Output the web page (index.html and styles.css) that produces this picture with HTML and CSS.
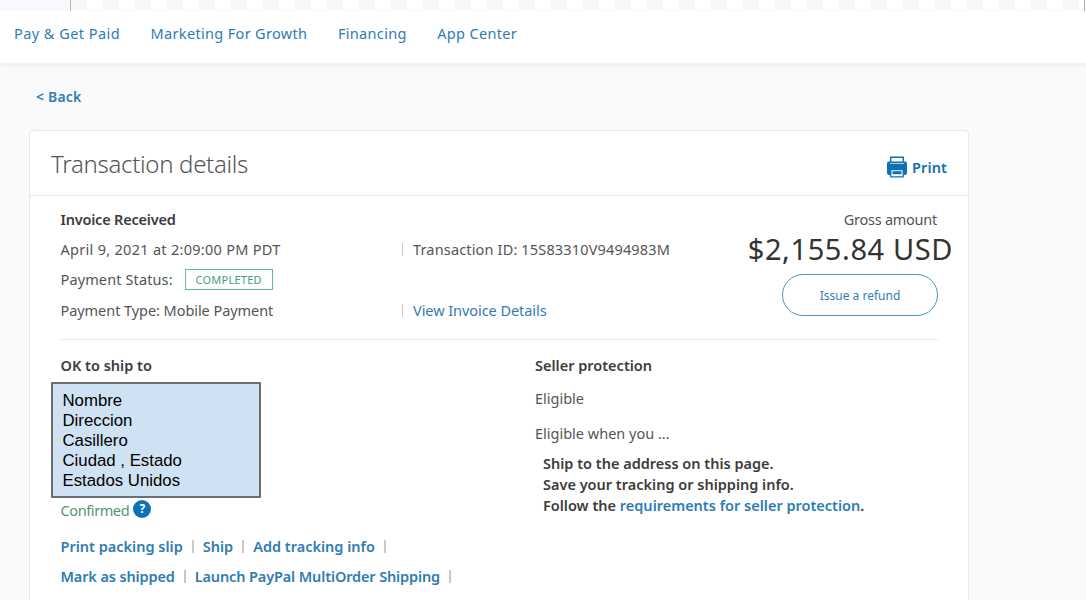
FILE: index.html
```html
<!DOCTYPE html>
<html lang="en">
<head>
    <meta charset="UTF-8">
    <meta name="viewport" content="width=device-width, initial-scale=1.0">
    <title>Transaction details</title>
    <link rel="stylesheet" href="styles.css">
</head>
<body>

    <div class="strip">
        <div class="strip-tab"></div>
        <div class="strip-pattern"></div>
    </div>

    <nav class="nav">
        <a class="nav-pay">Pay &amp; Get Paid</a>
        <a>Marketing For Growth</a>
        <a>Financing</a>
        <a>App Center</a>
    </nav>

    <a class="back">&lt; Back</a>

    <main class="card">
        <header class="card-header">
            <h1>Transaction details</h1>
            <a class="print">
                <svg width="20" height="22" viewBox="0 0 20 22">
                    <path d="M3.700 6V1.200h12.600V6" fill="#fff" stroke="#1070b6" stroke-width="1.500"/>
                    <path d="M2 5.500h16a2 2 0 0 1 2 2V17a2 2 0 0 1-2 2H2a2 2 0 0 1-2-2V7.500a2 2 0 0 1 2-2z" fill="#1070b6"/>
                    <path d="M3 7.500h14" stroke="#a9cfe8" stroke-width="1"/>
                    <path d="M3.800 13.500h12.400v7.300H3.800z" fill="#fff" stroke="#1070b6" stroke-width="1.300"/>
                    <path d="M5.500 15.200h9v3h-9z" fill="#1070b6"/>
                </svg>
                <span>Print</span>
            </a>
        </header>

        <section class="summary">
            <div class="summary-info">
                <div class="row"><b class="received">Invoice Received</b></div>
                <div class="row"><span class="date">April 9, 2021 at 2:09:00 PM PDT</span></div>
                <div class="row"><span class="status">Payment Status:</span><span class="badge">COMPLETED</span></div>
                <div class="row row-type"><span class="type">Payment Type: Mobile Payment</span></div>
            </div>
            <div class="summary-ids">
                <div class="row"></div>
                <div class="row"><i class="bar"></i><span class="transaction">Transaction ID: 15S83310V9494983M</span></div>
                <div class="row"></div>
                <div class="row row-type"><i class="bar"></i><a class="type">View Invoice Details</a></div>
            </div>
            <div class="gross">
                <span class="gross-label">Gross amount</span>
                <span class="amount">$2,155.84 USD</span>
                <button class="refund">Issue a refund</button>
            </div>
        </section>

        <section class="details">
            <div class="shipping">
                <b>OK to ship to</b>
                <div class="address">
                    Nombre<br>
                    Direccion<br>
                    Casillero<br>
                    Ciudad , Estado<br>
                    Estados Unidos
                </div>
                <div class="confirmed"><span>Confirmed</span><span class="help">?</span></div>
                <div class="actions">
                    <a>Print packing slip</a><i class="bar"></i>
                    <a>Ship</a><i class="bar"></i>
                    <a>Add tracking info</a><i class="bar"></i>
                </div>
                <div class="actions actions-tight">
                    <a>Mark as shipped</a><i class="bar"></i>
                    <a>Launch PayPal MultiOrder Shipping</a><i class="bar"></i>
                </div>
            </div>
            <div class="protection">
                <b>Seller protection</b>
                <p class="eligible">Eligible</p>
                <p class="eligible-when">Eligible when you ...</p>
                <ul>
                    <li>Ship to the address on this page.</li>
                    <li>Save your tracking or shipping info.</li>
                    <li>Follow the <a>requirements for seller protection</a>.</li>
                </ul>
            </div>
        </section>
    </main>

</body>
</html>
```

FILE: styles.css
```css
* {
    box-sizing: border-box;
}

body {
    margin: 0;
    height: 600px;
    overflow: hidden;
    background-color: #fafafa;
    color: #555;
    font-family: "Noto Sans", "Open Sans", sans-serif;
    font-size: 14.5px;
    line-height: 20px;
    white-space: nowrap;
}

a {
    color: #2f7cb5;
}

b {
    color: #3c3c3c;
    font-weight: 600;
}

/* Top strip */
.strip {
    display: flex;
    height: 11px;
}

.strip-tab {
    width: 71px;
    background-color: #f8f9fc;
    border-right: 1px solid #b9b9b9;
}

.strip-pattern {
    width: 1014px;
    border-right: 1px solid #b0b0b0;
    background: repeating-conic-gradient(#f7f7f7 0 25%, #fff 0 50%) 0 -22px / 32px 32px;
}

/* Navigation */
.nav {
    display: flex;
    gap: 30.5px;
    height: 53px;
    padding: 12px 14px 0;
    background-color: #fff;
    border-bottom: 1px solid #f2f2f2;
    box-shadow: 0 1px 4px rgba(0, 0, 0, 0.08);
    letter-spacing: 0.33px;
}

.nav-pay {
    letter-spacing: 0.45px;
}

.back {
    display: block;
    margin: 23px 0 0 36px;
    font-weight: 600;
    font-size: 14px;
    letter-spacing: 0.2px;
}

/* Card */
.card {
    width: 940px;
    height: 500px;
    margin: 23px 0 0 29px;
    background-color: #fff;
    border: 1px solid #e9e9e9;
    border-radius: 4px;
}

.card-header {
    display: flex;
    justify-content: space-between;
    height: 65px;
    padding: 16px 21px 0;
    border-bottom: 1px solid #e6e6e6;
}

h1 {
    margin: 0;
    font-size: 24px;
    font-weight: 300;
    line-height: 33px;
    letter-spacing: -0.3px;
}

.print {
    display: flex;
    gap: 5px;
    padding-top: 9px;
    font-weight: 600;
    line-height: 23px;
    letter-spacing: 0.1px;
    color: #1070b6;
}

/* Summary */
.summary {
    display: flex;
    height: 144px;
    margin: 0 30px 0 30px;
    padding-top: 8px;
    border-bottom: 1px solid #ebebeb;
}

.summary-info {
    width: 342px;
    padding-left: 0.5px;
}

.summary-ids {
    flex: 1;
}

.row {
    display: flex;
    align-items: center;
    height: 30px;
}

.row-type {
    margin-top: 1px;
}

.received {
    letter-spacing: -0.2px;
}

.date {
    letter-spacing: 0.29px;
}

.status {
    letter-spacing: 0.12px;
}

.type {
    letter-spacing: -0.06px;
}

.transaction {
    letter-spacing: 0.16px;
}

.bar {
    width: 1px;
    height: 13px;
    margin-right: 10px;
    background-color: #c8c8c8;
}

.badge {
    width: 88px;
    height: 21px;
    margin: 1px 0 0 12px;
    border: 1px solid #5bbfa8;
    color: #4a9a80;
    font-size: 11px;
    line-height: 20px;
    letter-spacing: 0.25px;
    text-align: center;
}

.gross {
    display: flex;
    flex-direction: column;
    align-items: flex-end;
    padding-top: 5px;
}

.gross-label {
    margin-right: 1px;
    letter-spacing: -0.25px;
}

.amount {
    margin-right: -15px;
    color: #333;
    font-size: 29px;
    line-height: 40px;
    letter-spacing: 0.6px;
}

.refund {
    width: 156px;
    height: 42px;
    margin-top: 5px;
    padding: 0;
    flex-shrink: 0;
    background-color: #fff;
    border: 1px solid #4b93c4;
    border-radius: 21px;
    color: #2f7cb5;
    font-family: inherit;
    font-size: 12px;
}

/* Details */
.details {
    display: flex;
    padding: 15px 0 0 30px;
}

.shipping {
    width: 475px;
    padding-left: 0.5px;
}

.address {
    width: 210px;
    height: 116px;
    margin: 7px 0 0 -9.5px;
    padding: 7px 0 0 9.5px;
    background-color: #cfe2f3;
    border: 2px solid #6b6f73;
    border-radius: 1px;
    color: #000;
    font-family: "Liberation Sans", Arial, sans-serif;
    font-size: 16.8px;
}

.confirmed {
    display: flex;
    align-items: center;
    gap: 4px;
    height: 24px;
    color: #4f9779;
    letter-spacing: -0.4px;
}

.help {
    width: 18px;
    height: 18px;
    margin-top: -3px;
    border-radius: 50%;
    background-color: #1070b6;
    color: #fff;
    font-size: 12px;
    font-weight: 700;
    line-height: 18px;
    text-align: center;
}

.actions {
    display: flex;
    align-items: center;
    height: 30px;
    font-weight: 600;
}

.actions-tight {
    letter-spacing: -0.13px;
}

.confirmed + .actions {
    margin-top: 9px;
}

.actions .bar {
    width: 2px;
    margin: 0 9px;
}

.protection b {
    display: block;
}

.eligible {
    margin: 13px 0 15px;
}

.eligible-when {
    margin: 0 0 10px;
}

ul {
    margin: 0;
    padding: 0 0 0 8px;
    list-style: none;
    color: #3c3c3c;
    font-weight: 600;
    line-height: 21px;
}
```
